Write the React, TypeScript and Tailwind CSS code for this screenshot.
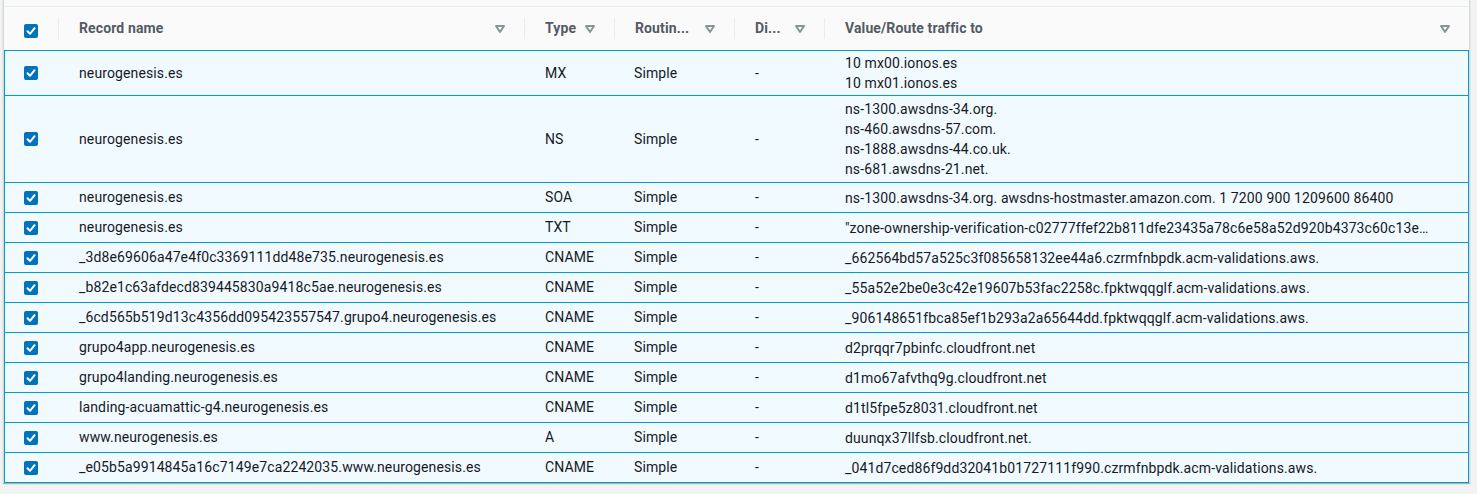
import React from 'react';

interface DnsRecord {
  name: string;
  type: string;
  values: string[];
  height: string;
}

const records: DnsRecord[] = [
  { name: 'neurogenesis.es', type: 'MX', values: ['10 mx00.ionos.es', '10 mx01.ionos.es'], height: 'h-[44px]' },
  {
    name: 'neurogenesis.es',
    type: 'NS',
    values: ['ns-1300.awsdns-34.org.', 'ns-460.awsdns-57.com.', 'ns-1888.awsdns-44.co.uk.', 'ns-681.awsdns-21.net.'],
    height: 'h-[86px]',
  },
  {
    name: 'neurogenesis.es',
    type: 'SOA',
    values: ['ns-1300.awsdns-34.org. awsdns-hostmaster.amazon.com. 1 7200 900 1209600 86400'],
    height: 'h-[29px]',
  },
  {
    name: 'neurogenesis.es',
    type: 'TXT',
    values: ['"zone-ownership-verification-c02777ffef22b811dfe23435a78c6e58a52d920b4373c60c13e…'],
    height: 'h-[29px]',
  },
  {
    name: '_3d8e69606a47e4f0c3369111dd48e735.neurogenesis.es',
    type: 'CNAME',
    values: ['_662564bd57a525c3f085658132ee44a6.czrmfnbpdk.acm-validations.aws.'],
    height: 'h-[29px]',
  },
  {
    name: '_b82e1c63afdecd839445830a9418c5ae.neurogenesis.es',
    type: 'CNAME',
    values: ['_55a52e2be0e3c42e19607b53fac2258c.fpktwqqglf.acm-validations.aws.'],
    height: 'h-[29px]',
  },
  {
    name: '_6cd565b519d13c4356dd095423557547.grupo4.neurogenesis.es',
    type: 'CNAME',
    values: ['_906148651fbca85ef1b293a2a65644dd.fpktwqqglf.acm-validations.aws.'],
    height: 'h-[29px]',
  },
  { name: 'grupo4app.neurogenesis.es', type: 'CNAME', values: ['d2prqqr7pbinfc.cloudfront.net'], height: 'h-[29px]' },
  { name: 'grupo4landing.neurogenesis.es', type: 'CNAME', values: ['d1mo67afvthq9g.cloudfront.net'], height: 'h-[29px]' },
  { name: 'landing-acuamattic-g4.neurogenesis.es', type: 'CNAME', values: ['d1tl5fpe5z8031.cloudfront.net'], height: 'h-[29px]' },
  { name: 'www.neurogenesis.es', type: 'A', values: ['duunqx37llfsb.cloudfront.net.'], height: 'h-[29px]' },
  {
    name: '_e05b5a9914845a16c7149e7ca2242035.www.neurogenesis.es',
    type: 'CNAME',
    values: ['_041d7ced86f9dd32041b01727111f990.czrmfnbpdk.acm-validations.aws.'],
    height: 'h-[29px]',
  },
];

function Checkbox() {
  return (
    <svg width="14" height="14" viewBox="0 0 14 14" className="block">
      <rect x="0" y="0" width="14" height="14" rx="2" fill="#0073bb" />
      <polyline points="3.5,7.3 6,9.8 10.6,4.2" fill="none" stroke="#fff" strokeWidth="2" strokeLinecap="round" strokeLinejoin="round" />
    </svg>
  );
}

function SortCaret() {
  return (
    <svg width="12" height="10" viewBox="0 0 12 10" className="block shrink-0">
      <path d="M2 2 H10 L6 8 Z" fill="none" stroke="#879596" strokeWidth="2" strokeLinejoin="round" />
    </svg>
  );
}

function HeaderCell({ label, width }: { label: string; width: string }) {
  return (
    <div className={`${width} flex items-center h-full relative`}>
      <div className="absolute left-0 top-[11px] bottom-[11px] w-px bg-[#eaeded]" />
      <span className="pl-[21px] font-bold text-[#545b64] whitespace-nowrap">{label}</span>
      <div className="ml-auto pr-[18px]">
        <SortCaret />
      </div>
    </div>
  );
}

export default function App() {
  return (
    <div
      className="min-h-[494px] bg-[#f2f3f3] text-[14px] tracking-[0.12px] text-[#16191f]"
      style={{ fontFamily: 'Roboto, "Open Sans", sans-serif' }}
    >
      <div className="ml-[3px] w-[1467px] bg-[#fafafa] border-x border-[#d5dbdb] shadow-[0_1px_1px_0_rgba(0,28,36,0.3)]">
        <div className="h-[6px]" />
        <div className="border-t border-[#eaeded] h-[44px] flex items-center">
          <div className="w-[54px] h-full flex items-center pl-[20px] pt-[4px]">
            <Checkbox />
          </div>
          <HeaderCell label="Record name" width="w-[466px]" />
          <HeaderCell label="Type" width="w-[90px]" />
          <HeaderCell label="Routin..." width="w-[120px]" />
          <HeaderCell label="Di..." width="w-[90px]" />
          <HeaderCell label="Value/Route traffic to" width="flex-1" />
        </div>
        <div className="border-b border-[#00a1c9]">
          {records.map((r, i) => (
            <div
              key={i}
              className={`${r.height} flex items-center bg-[#f1faff] border-t border-x border-[#00a1c9] box-content`}
            >
              <div className="w-[53px] pl-[19px] flex items-center">
                <Checkbox />
              </div>
              <div className="w-[466px] pl-[21px] whitespace-nowrap">{r.name}</div>
              <div className="w-[90px] pl-[21px]">{r.type}</div>
              <div className="w-[120px] pl-[20px]">Simple</div>
              <div className="w-[90px] pl-[21px]">-</div>
              <div className="flex-1 min-w-0 pl-[21px] pr-[20px] leading-[20px]">
                {r.values.map((v, j) => (
                  <div key={j} className="whitespace-nowrap">
                    {v}
                  </div>
                ))}
              </div>
            </div>
          ))}
        </div>
      </div>
    </div>
  );
}
